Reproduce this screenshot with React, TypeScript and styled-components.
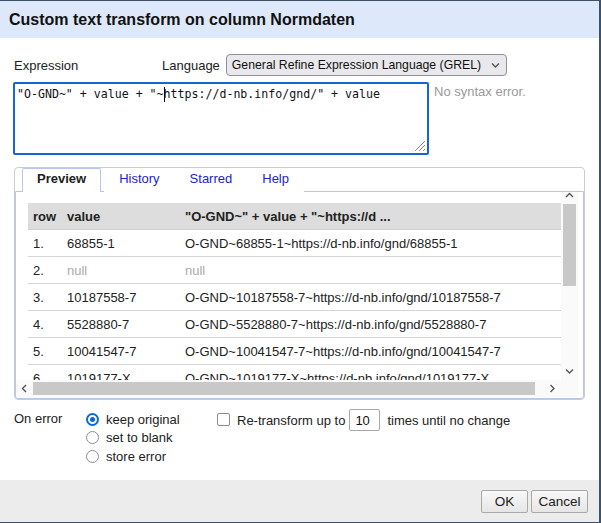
import React from "react";
import styled, { createGlobalStyle } from "styled-components";

const Global = createGlobalStyle`
  html, body { margin: 0; padding: 0; background: #fff; }
  body { font-family: "Liberation Sans", Arial, sans-serif; font-size: 13px; color: #222; }
`;

const Dialog = styled.div`
  width: 601px;
  height: 523px;
  box-sizing: border-box;
  border-top: 1px solid #3d5168;
  border-right: 2px solid #3d5168;
  border-bottom: 1px solid #3d5168;
  background: #fff;
  display: flex;
  flex-direction: column;
`;

const Header = styled.div`
  height: 37px;
  flex: none;
  background: #dde9fb;
  padding: 0 9px;
  box-sizing: border-box;
  display: flex;
  align-items: center;
  font-size: 16px;
  font-weight: bold;
  color: #111;
`;

const Body = styled.div`
  flex: 1;
  min-height: 0;
  padding: 16px 14px 0 14px;
  display: flex;
  flex-direction: column;
`;

const TopRow = styled.div`
  display: flex;
  align-items: center;
  height: 22px;
  flex: none;
`;

const FieldLabel = styled.span<{ $width?: number }>`
  width: ${(p) => (p.$width ? `${p.$width}px` : "auto")};
  margin-right: ${(p) => (p.$width ? 0 : 6)}px;
  color: #222;
`;

const FakeSelect = styled.div`
  width: 281px;
  height: 22px;
  box-sizing: border-box;
  border: 1px solid #8f8f9d;
  border-radius: 4px;
  background: #e9e9ed;
  display: flex;
  align-items: center;
  justify-content: space-between;
  padding: 0 6px 0 5px;
  color: #111;
  white-space: nowrap;
  font-size: 12.25px;
`;

const ExprRow = styled.div`
  display: flex;
  align-items: flex-start;
  margin-top: 6px;
  flex: none;
`;

const ExprBox = styled.div`
  position: relative;
  width: 416px;
  height: 73px;
  margin-left: -1px;
  box-sizing: border-box;
  border: 2px solid #1864d4;
  border-radius: 2px;
  padding: 3px 2px;
  font-family: "DejaVu Sans Mono", "Liberation Mono", monospace;
  font-size: 11.6px;
  line-height: 15px;
  color: #111;
  white-space: pre;
`;

const Caret = styled.span`
  display: inline-block;
  width: 1px;
  height: 15px;
  background: #000;
  vertical-align: top;
  margin-right: -1px;
`;

const Grip = styled.svg`
  position: absolute;
  right: 1px;
  bottom: 1px;
`;

const Status = styled.span`
  margin-left: 5px;
  padding-top: 2px;
  color: #9a9a9a;
`;

const TabsBox = styled.div`
  margin-top: 12px;
  width: 571px;
  height: 233px;
  flex: none;
  box-sizing: border-box;
  border: 1px solid #cccccc;
  border-radius: 4px;
  display: flex;
  flex-direction: column;
`;

const TabStrip = styled.div`
  display: flex;
  align-items: flex-end;
  height: 23px;
  padding-left: 7px;
  flex: none;
`;

const Tab = styled.div<{ $active?: boolean }>`
  position: relative;
  z-index: 1;
  height: 24px;
  box-sizing: border-box;
  margin-bottom: -1px;
  margin-right: ${(p) => (p.$active ? 3 : 0)}px;
  padding: 0 14px 4px;
  display: flex;
  align-items: center;
  background: #fff;
  border: 1px solid ${(p) => (p.$active ? "#b7c6e9" : "transparent")};
  border-bottom: none;
  border-radius: 2px 2px 0 0;
  font-size: 13px;
  font-weight: ${(p) => (p.$active ? "bold" : "normal")};
  color: ${(p) => (p.$active ? "#222" : "#2323d0")};
`;

const Panel = styled.div`
  flex: 1;
  min-height: 0;
  border: 1px solid #b7c6e9;
  border-radius: 0 0 3px 3px;
  padding: 0 5px 1px 0;
  display: flex;
`;

const ScrollArea = styled.div`
  flex: 1;
  min-height: 0;
  min-width: 0;
  display: grid;
  grid-template-columns: minmax(0, 1fr) 17px;
  grid-template-rows: minmax(0, 1fr) 17px;
`;

const Viewport = styled.div`
  overflow: hidden;
  min-height: 0;
  padding: 11px 0 0 12px;
`;

const Table = styled.table`
  border-collapse: collapse;
  table-layout: fixed;
  width: 575px;
`;

const HeadCell = styled.th<{ $width?: number }>`
  width: ${(p) => (p.$width ? `${p.$width}px` : "auto")};
  height: 26px;
  padding: 0 5px;
  background: #dddddd;
  text-align: left;
  font-weight: bold;
  color: #222;
  white-space: nowrap;
  border-bottom: 1px solid #cfcfcf;
`;

const Cell = styled.td<{ $null?: boolean }>`
  height: 26px;
  padding: 0 5px;
  white-space: nowrap;
  overflow: hidden;
  color: ${(p) => (p.$null ? "#aaaaaa" : "#222")};
  border-bottom: 1px solid #d6d6d6;
`;

const VBar = styled.div`
  background: #fafafa;
  display: grid;
  grid-template-rows: 12px 82px minmax(0, 1fr) 17px;
  min-height: 0;
`;

const HBar = styled.div`
  background: #fafafa;
  display: grid;
  grid-template-columns: 17px 502px minmax(0, 1fr) 17px;
`;

const Corner = styled.div`
  background: #fafafa;
`;

const ArrowBtn = styled.div<{ $align?: string }>`
  display: flex;
  align-items: ${(p) => p.$align || "center"};
  justify-content: center;
`;

const Thumb = styled.div<{ $dir: "v" | "h" }>`
  background: #c8c8c8;
  margin: ${(p) => (p.$dir === "v" ? "0 2px" : "2px 0")};
`;

const Options = styled.div`
  display: flex;
  align-items: flex-start;
  margin-top: 10px;
`;

const OnErrorLabel = styled.div`
  width: 72px;
  line-height: 18.5px;
`;

const RadioCol = styled.div`
  width: 131px;
  display: flex;
  flex-direction: column;
`;

const RadioRow = styled.label`
  display: flex;
  align-items: center;
  height: 18.5px;
`;

const RadioDot = styled.span<{ $checked?: boolean }>`
  width: 13px;
  height: 13px;
  box-sizing: border-box;
  border-radius: 50%;
  border: ${(p) => (p.$checked ? "2px solid #0a67d8" : "1.5px solid #8d8d98")};
  margin-right: 7px;
  display: flex;
  align-items: center;
  justify-content: center;
  &::after {
    content: "";
    display: ${(p) => (p.$checked ? "block" : "none")};
    width: 5px;
    height: 5px;
    border-radius: 50%;
    background: #0a67d8;
  }
`;

const CheckRow = styled.div`
  display: flex;
  align-items: center;
  height: 22px;
  margin-top: -1px;
`;

const CheckBox = styled.span`
  width: 13px;
  height: 13px;
  box-sizing: border-box;
  border: 1.5px solid #8d8d98;
  border-radius: 2px;
  margin-right: 7px;
  margin-top: -1px;
`;

const NumInput = styled.div`
  width: 31px;
  height: 22px;
  box-sizing: border-box;
  border: 1px solid #a8a8a8;
  border-radius: 2px;
  margin: 0 7px 0 4px;
  padding-left: 5px;
  display: flex;
  align-items: center;
  color: #111;
`;

const Footer = styled.div`
  height: 42px;
  flex: none;
  background: #ececec;
  display: flex;
  justify-content: flex-end;
  align-items: center;
  gap: 3px;
  padding-right: 11px;
`;

const Button = styled.button<{ $width: number }>`
  width: ${(p) => p.$width}px;
  height: 23px;
  margin-top: 1px;
  border: 1px solid #a9a9a9;
  border-radius: 2px;
  background: linear-gradient(#f8f8f8, #e6e6e6);
  font-family: "Liberation Sans", Arial, sans-serif;
  font-size: 13.5px;
  color: #222;
  padding: 0;
`;

const Chevron = ({ dir }: { dir: "up" | "down" | "left" | "right" }) => {
  const pts: Record<string, string> = {
    up: "1,5 4.5,1.5 8,5",
    down: "1,1.5 4.5,5 8,1.5",
    left: "5,1 1.5,4.5 5,8",
    right: "1.5,1 5,4.5 1.5,8",
  };
  const vertical = dir === "up" || dir === "down";
  return (
    <svg width={vertical ? 9 : 7} height={vertical ? 7 : 9} viewBox={vertical ? "0 0 9 7" : "0 0 7 9"}>
      <polyline points={pts[dir]} fill="none" stroke="#555" strokeWidth="1.4" />
    </svg>
  );
};

const rows: { n: number; v: string; r: string; isNull?: boolean }[] = [
  { n: 1, v: "68855-1", r: "O-GND~68855-1~https://d-nb.info/gnd/68855-1" },
  { n: 2, v: "null", r: "null", isNull: true },
  { n: 3, v: "10187558-7", r: "O-GND~10187558-7~https://d-nb.info/gnd/10187558-7" },
  { n: 4, v: "5528880-7", r: "O-GND~5528880-7~https://d-nb.info/gnd/5528880-7" },
  { n: 5, v: "10041547-7", r: "O-GND~10041547-7~https://d-nb.info/gnd/10041547-7" },
  { n: 6, v: "1019177-X", r: "O-GND~1019177-X~https://d-nb.info/gnd/1019177-X" },
];

export default function App() {
  return (
    <>
      <Global />
      <Dialog>
        <Header>Custom text transform on column Normdaten</Header>
        <Body>
          <TopRow>
            <FieldLabel $width={148}>Expression</FieldLabel>
            <FieldLabel>Language</FieldLabel>
            <FakeSelect>
              <span>General Refine Expression Language (GREL)</span>
              <Chevron dir="down" />
            </FakeSelect>
          </TopRow>
          <ExprRow>
            <ExprBox>
              {'"O-GND~" + value + "~'}
              <Caret />
              {'https://d-nb.info/gnd/" + value'}
              <Grip width="14" height="14" viewBox="0 0 14 14">
                <path d="M13 3 L3 13 M13 7 L7 13 M13 11 L11 13" stroke="#888" strokeWidth="1" />
              </Grip>
            </ExprBox>
            <Status>No syntax error.</Status>
          </ExprRow>
          <TabsBox>
            <TabStrip>
              <Tab $active>Preview</Tab>
              <Tab>History</Tab>
              <Tab>Starred</Tab>
              <Tab>Help</Tab>
            </TabStrip>
            <Panel>
              <ScrollArea>
                <Viewport>
                  <Table>
                    <thead>
                      <tr>
                        <HeadCell $width={24}>row</HeadCell>
                        <HeadCell $width={108}>value</HeadCell>
                        <HeadCell>"O-GND~" + value + "~https://d ...</HeadCell>
                      </tr>
                    </thead>
                    <tbody>
                      {rows.map((r) => (
                        <tr key={r.n}>
                          <Cell>{r.n}.</Cell>
                          <Cell $null={r.isNull}>{r.v}</Cell>
                          <Cell $null={r.isNull}>{r.r}</Cell>
                        </tr>
                      ))}
                    </tbody>
                  </Table>
                </Viewport>
                <VBar>
                  <ArrowBtn $align="flex-start">
                    <Chevron dir="up" />
                  </ArrowBtn>
                  <Thumb $dir="v" />
                  <div />
                  <ArrowBtn>
                    <Chevron dir="down" />
                  </ArrowBtn>
                </VBar>
                <HBar>
                  <ArrowBtn>
                    <Chevron dir="left" />
                  </ArrowBtn>
                  <Thumb $dir="h" />
                  <div />
                  <ArrowBtn>
                    <Chevron dir="right" />
                  </ArrowBtn>
                </HBar>
                <Corner />
              </ScrollArea>
            </Panel>
          </TabsBox>
          <Options>
            <OnErrorLabel>On error</OnErrorLabel>
            <RadioCol>
              <RadioRow>
                <RadioDot $checked />
                keep original
              </RadioRow>
              <RadioRow>
                <RadioDot />
                set to blank
              </RadioRow>
              <RadioRow>
                <RadioDot />
                store error
              </RadioRow>
            </RadioCol>
            <CheckRow>
              <CheckBox />
              Re-transform up to
              <NumInput>10</NumInput>
              times until no change
            </CheckRow>
          </Options>
        </Body>
        <Footer>
          <Button $width={47}>OK</Button>
          <Button $width={57}>Cancel</Button>
        </Footer>
      </Dialog>
    </>
  );
}
